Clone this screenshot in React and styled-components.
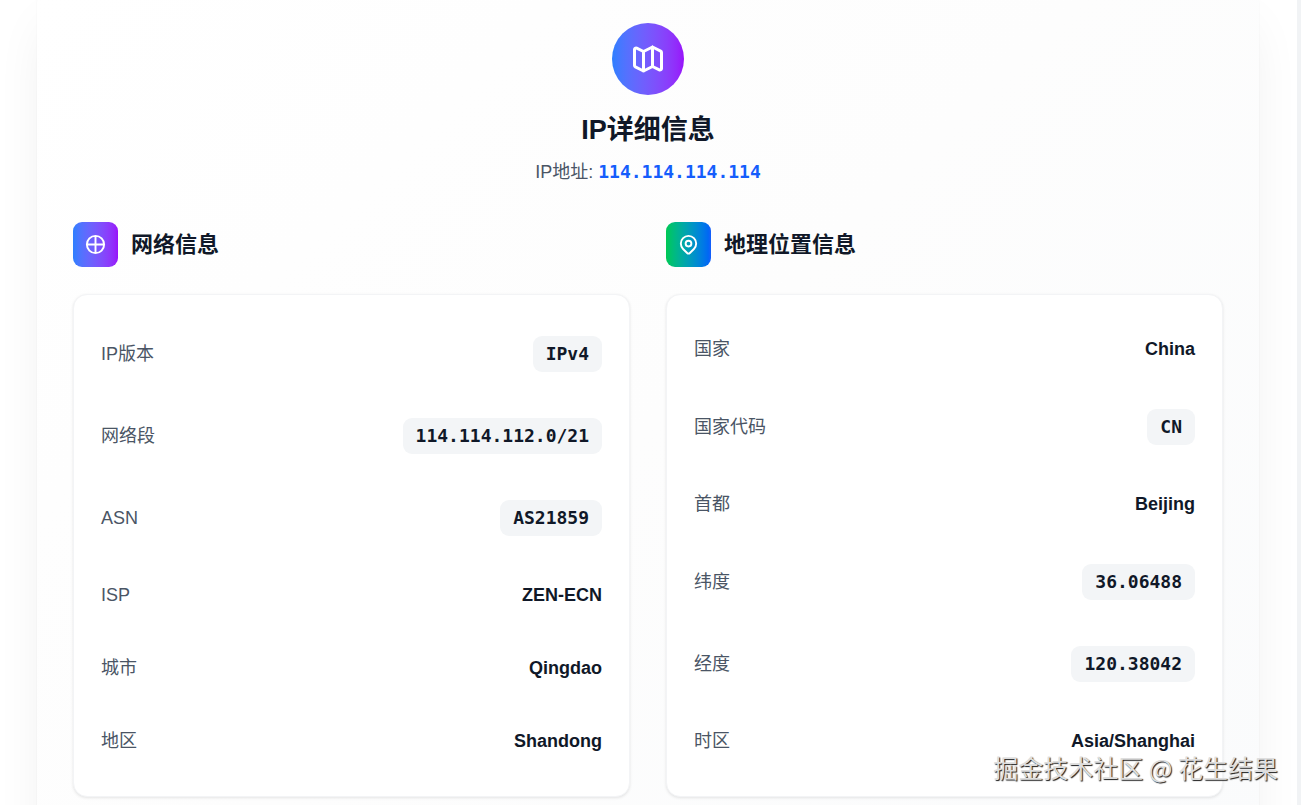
import styled, { createGlobalStyle } from "styled-components";

const networkRows = [
  { label: "IP版本", value: "IPv4", code: true },
  { label: "网络段", value: "114.114.112.0/21", code: true },
  { label: "ASN", value: "AS21859", code: true },
  { label: "ISP", value: "ZEN-ECN" },
  { label: "城市", value: "Qingdao" },
  { label: "地区", value: "Shandong" },
];

const locationRows = [
  { label: "国家", value: "China" },
  { label: "国家代码", value: "CN", code: true },
  { label: "首都", value: "Beijing" },
  { label: "纬度", value: "36.06488", code: true },
  { label: "经度", value: "120.38042", code: true },
  { label: "时区", value: "Asia/Shanghai" },
];

function MapIcon() {
  return (
    <Icon $size={36} viewBox="0 0 24 24">
      <path d="M9 20l-5.447-2.724A1 1 0 013 16.382V5.618a1 1 0 011.447-.894L9 7m0 13l6-3m-6 3V7m6 10l4.553 2.276A1 1 0 0021 18.382V7.618a1 1 0 00-.553-.894L15 4m0 13V4m0 0L9 7" />
    </Icon>
  );
}

function NetworkIcon() {
  return (
    <Icon $size={23} viewBox="0 0 24 24">
      <path d="M21 12a9 9 0 01-9 9m9-9a9 9 0 00-9-9m9 9H3m9 9a9 9 0 01-9-9m9 9V3m-9 9a9 9 0 019-9" />
    </Icon>
  );
}

function PinIcon() {
  return (
    <Icon $size={23} viewBox="0 0 24 24">
      <path d="M17.657 16.657L13.414 20.9a1.998 1.998 0 01-2.827 0l-4.244-4.243a8 8 0 1111.314 0z" />
      <path d="M15 11a3 3 0 11-6 0 3 3 0 016 0z" />
    </Icon>
  );
}

function InfoSection({ title, icon, colors, rows }) {
  return (
    <Section>
      <SectionHeader>
        <SectionIcon $colors={colors}>{icon}</SectionIcon>
        <SectionTitle>{title}</SectionTitle>
      </SectionHeader>
      <InfoCard>
        {rows.map((row) => (
          <InfoRow key={row.label}>
            <Label>{row.label}</Label>
            {row.code ? (
              <CodeValue>{row.value}</CodeValue>
            ) : (
              <Value>{row.value}</Value>
            )}
          </InfoRow>
        ))}
      </InfoCard>
    </Section>
  );
}

function App() {
  return (
    <Page>
      <GlobalStyle />
      <Panel>
        <Header>
          <HeaderIcon>
            <MapIcon />
          </HeaderIcon>
          <Title>IP详细信息</Title>
          <Subtitle>
            IP地址: <IpAddress>114.114.114.114</IpAddress>
          </Subtitle>
        </Header>
        <Columns>
          <InfoSection
            title="网络信息"
            icon={<NetworkIcon />}
            colors="#2b7fff, #9810fa"
            rows={networkRows}
          />
          <InfoSection
            title="地理位置信息"
            icon={<PinIcon />}
            colors="#00c951, #155dfc"
            rows={locationRows}
          />
        </Columns>
      </Panel>
      <Watermark>掘金技术社区 @ 花生结果</Watermark>
    </Page>
  );
}

export default App;

const GlobalStyle = createGlobalStyle`
  * {
    box-sizing: border-box;
  }

  body {
    margin: 0;
    background: #ffffff;
    font-family: "Liberation Sans", "Noto Sans CJK SC", sans-serif;
    font-size: 18px;
    line-height: 27px;
    color: #101828;
  }
`;

const Page = styled.main`
  position: relative;
  height: 100vh;
  overflow: hidden;
  padding: 0 38px 0 37px;
  border-right: 4px solid #f1f3f5;
`;

/* the panel runs past both the top and the bottom of the window */
const Panel = styled.div`
  min-height: calc(100vh + 80px);
  margin-top: -13px;
  padding: 36px;
  border-radius: 18px;
  background: linear-gradient(135deg, #ffffff, #fdfdfd 50%, #fafbfc);
  box-shadow: 0 28px 56px -14px rgba(0, 0, 0, 0.09), 0 0 2px rgba(0, 0, 0, 0.06);
`;

const Header = styled.header`
  display: flex;
  flex-direction: column;
  align-items: center;
  margin-bottom: 36px;
`;

const HeaderIcon = styled.div`
  display: flex;
  align-items: center;
  justify-content: center;
  width: 72px;
  height: 72px;
  border-radius: 50%;
  color: #ffffff;
  background: linear-gradient(to right in oklab, #2b7fff, #9810fa);
`;

const Title = styled.h1`
  margin: 17px 0 10px;
  font-size: 27px;
  line-height: 36px;
  font-weight: 700;
`;

const Subtitle = styled.p`
  margin: 0;
  color: #4a5565;
`;

const IpAddress = styled.span`
  font-family: "DejaVu Sans Mono", monospace;
  font-weight: 700;
  color: #155dfc;
`;

const Columns = styled.div`
  display: grid;
  grid-template-columns: 1fr 1fr;
  gap: 36px;
  align-items: start;
`;

const Section = styled.section`
  min-width: 0;
`;

const SectionHeader = styled.div`
  display: flex;
  align-items: center;
  gap: 13px;
  margin-bottom: 27px;
`;

const SectionIcon = styled.div`
  display: flex;
  align-items: center;
  justify-content: center;
  width: 45px;
  height: 45px;
  border-radius: 9px;
  color: #ffffff;
  background: linear-gradient(to right in oklab, ${(props) => props.$colors});
`;

const SectionTitle = styled.h2`
  margin: 0;
  font-size: 22px;
  line-height: 32px;
  font-weight: 700;
`;

const InfoCard = styled.dl`
  display: flex;
  flex-direction: column;
  gap: 18px;
  margin: 0;
  padding: 27px;
  border: 1px solid #f3f4f6;
  border-radius: 14px;
  background: #ffffff;
  box-shadow: 0 1px 3px rgba(0, 0, 0, 0.1);
`;

const InfoRow = styled.div`
  display: flex;
  align-items: center;
  justify-content: space-between;
  padding: 14px 0;
`;

const Label = styled.dt`
  color: #4a5565;
`;

const Value = styled.dd`
  margin: 0;
  font-weight: 700;
`;

const CodeValue = styled.dd`
  margin: 0;
  padding: 4px 13px 5px;
  border-radius: 9px;
  font-family: "DejaVu Sans Mono", monospace;
  font-weight: 700;
  background: #f3f5f7;
`;

const Watermark = styled.div`
  position: absolute;
  right: 19px;
  bottom: 20px;
  font-family: "Noto Sans CJK SC", sans-serif;
  font-size: 25px;
  line-height: 36px;
  color: #dedede;
  text-shadow: 1px 1px 1px rgba(0, 0, 0, 0.9);
`;

const Icon = styled.svg`
  width: ${(props) => props.$size}px;
  height: ${(props) => props.$size}px;
  fill: none;
  stroke: currentColor;
  stroke-width: 2;
  stroke-linecap: round;
  stroke-linejoin: round;
`;
